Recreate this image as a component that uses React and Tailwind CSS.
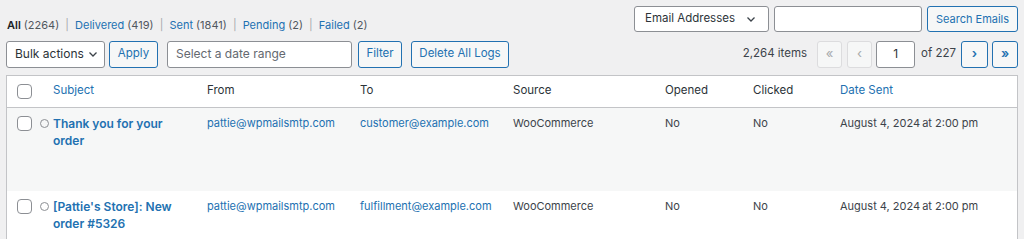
import React from "react";

const Chevron = () => (
  <svg width="10" height="10" viewBox="0 0 10 10" className="ml-1 shrink-0">
    <path d="M1.5 3.5 L5 7 L8.5 3.5" fill="none" stroke="#3c434a" strokeWidth="1.3" />
  </svg>
);

const Check = () => (
  <div className="w-[15px] h-[15px] rounded-[4px] border border-[#8c8f94] bg-white shrink-0" />
);

const rows = [
  { subject: ["Thank you for your", "order"], to: "customer@example.com", bg: "bg-[#f6f7f7]" },
  { subject: ["[Pattie's Store]: New", "order #5326"], to: "fulfillment@example.com", bg: "bg-white" },
];

export default function App() {
  return (
    <div className="w-[1024px] h-[239px] overflow-hidden bg-[#f0f0f1] text-[11px] text-[#3c434a] whitespace-nowrap" style={{ fontFamily: "Inter, 'Noto Sans', sans-serif" }}>
      <div className="flex justify-between pl-[7px] pr-[6px] pt-[6px]">
        <div className="pt-[11px] text-[#50575e]">
          <span className="font-semibold text-[#1d2327]">All</span> (2264) <span className="text-[#a7aaad] mx-[3px]">|</span>{" "}
          <span className="text-[#2271b1]">Delivered</span> (419) <span className="text-[#a7aaad] mx-[3px]">|</span>{" "}
          <span className="text-[#2271b1]">Sent</span> (1841) <span className="text-[#a7aaad] mx-[3px]">|</span>{" "}
          <span className="text-[#2271b1]">Pending</span> (2) <span className="text-[#a7aaad] mx-[3px]">|</span>{" "}
          <span className="text-[#2271b1]">Failed</span> (2)
        </div>
        <div className="flex gap-[5px] h-[26px]">
          <div className="w-[135px] flex items-center justify-between pl-[10px] pr-[12px] bg-white border border-[#8c8f94] rounded-[3px] text-[#2c3338] text-[11.5px]">
            <span>Email Addresses</span>
            <Chevron />
          </div>
          <div className="w-[148px] bg-white border border-[#8c8f94] rounded-[3px]" />
          <div className="w-[91px] flex items-center justify-center border border-[#2271b1] rounded-[3px] bg-[#f6f7f7] text-[#2271b1]">
            Search Emails
          </div>
        </div>
      </div>

      <div className="flex justify-between items-center pl-[6px] pr-[6px] mt-[7px] h-[27px]">
        <div className="flex h-full items-stretch">
          <div className="w-[99px] flex items-center justify-between pl-[8px] pr-[8px] bg-white border border-[#8c8f94] rounded-[3px] text-[#2c3338] text-[12px]">
            <span>Bulk actions</span>
            <Chevron />
          </div>
          <div className="ml-[4px] w-[49px] flex items-center justify-center border border-[#2271b1] rounded-[3px] bg-[#f6f7f7] text-[#2271b1] text-[11.5px]">Apply</div>
          <div className="ml-[9px] w-[185px] flex items-center px-[8px] bg-white border border-[#8c8f94] rounded-[3px] text-[#646970] text-[12px]">Select a date range</div>
          <div className="ml-[6px] w-[44px] flex items-center justify-center border border-[#2271b1] rounded-[3px] bg-[#f6f7f7] text-[#2271b1] text-[11.5px]">Filter</div>
          <div className="ml-[9px] w-[98px] flex items-center justify-center border border-[#2271b1] rounded-[3px] bg-[#f6f7f7] text-[#2271b1] text-[11.5px]">Delete All Logs</div>
        </div>
        <div className="flex h-full items-stretch">
          <div className="flex items-center text-[#3c434a] mr-[10px] text-[11.5px]">2,264 items</div>
          <div className="w-[25px] flex items-center justify-center border border-[#dcdcde] rounded-[3px] bg-[#f6f7f7] text-[#a7aaad] text-[13px]">«</div>
          <div className="ml-[5px] w-[25px] flex items-center justify-center border border-[#dcdcde] rounded-[3px] bg-[#f6f7f7] text-[#a7aaad] text-[13px]">‹</div>
          <div className="ml-[4px] w-[39px] flex items-center justify-center border border-[#8c8f94] rounded-[3px] bg-white text-[#2c3338] text-[12px]">1</div>
          <div className="ml-[6px] flex items-center text-[11.5px]">of 227</div>
          <div className="ml-[5px] w-[27px] flex items-center justify-center border border-[#2271b1] rounded-[3px] bg-[#f6f7f7] text-[#2271b1] text-[13px] font-semibold">›</div>
          <div className="ml-[4px] w-[26px] flex items-center justify-center border border-[#2271b1] rounded-[3px] bg-[#f6f7f7] text-[#2271b1] text-[13px] font-semibold">»</div>
        </div>
      </div>

      <div className="mx-[6px] mt-[7px] border border-[#c3c4c7] bg-white">
        <div className="flex items-center h-[32px] border-b border-[#c3c4c7] text-[#2c3338] text-[11.5px]">
          <div className="w-[46px] pl-[10px]"><Check /></div>
          <div className="w-[154px] text-[#2271b1]">Subject</div>
          <div className="w-[153px]">From</div>
          <div className="w-[153px]">To</div>
          <div className="w-[152px]">Source</div>
          <div className="w-[88px]">Opened</div>
          <div className="w-[87px]">Clicked</div>
          <div className="text-[#2271b1]">Date Sent</div>
        </div>
        {rows.map((r, i) => (
          <div key={i} className={`flex items-start h-[83px] ${r.bg} pt-[7px] leading-[17px]`}>
            <div className="w-[46px] pl-[10px] flex items-center gap-[8px] pt-[1px]">
              <Check />
              <div className="w-[9px] h-[9px] rounded-full border border-[#8c8f94]" />
            </div>
            <div className="w-[154px] text-[#2271b1] font-semibold text-[12px]">
              {r.subject[0]}<br />{r.subject[1]}
            </div>
            <div className="w-[153px] text-[#2271b1]">pattie@wpmailsmtp.com</div>
            <div className="w-[153px] text-[#2271b1]">{r.to}</div>
            <div className="w-[152px]">WooCommerce</div>
            <div className="w-[88px]">No</div>
            <div className="w-[87px]">No</div>
            <div>August 4, 2024<span className="ml-[2px]">at 2:00 pm</span></div>
          </div>
        ))}
      </div>
    </div>
  );
}
